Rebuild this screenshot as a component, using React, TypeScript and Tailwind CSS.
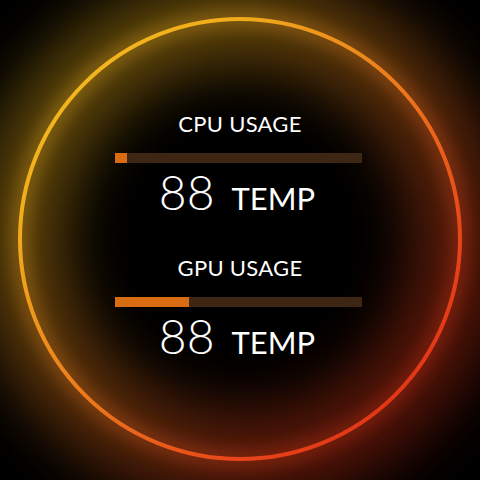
import React from "react"

interface GaugeProps {
    label: string
    percent: number
    value: string
}

function UsageBlock({ label, percent, value }: GaugeProps) {
    return (
        <div className="flex flex-col items-center">
            <div className="text-[22px] leading-[26px] font-normal tracking-[0.3px] text-white">{label}</div>
            <div className="mt-[16px] h-[10px] w-[247px] -translate-x-[2px] bg-[#3e2614]">
                <div className="h-full bg-[#d86c12]" style={{ width: `${percent}%` }} />
            </div>
            <div className="mt-[3px] flex -translate-x-[3px] items-baseline gap-[17px] text-white">
                <span className="text-[48px] leading-[52px] font-light">{value}</span>
                <span className="text-[31px] leading-[40px] font-normal">TEMP</span>
            </div>
        </div>
    )
}

function Ring() {
    return (
        <svg className="absolute inset-0" width="480" height="480" viewBox="0 0 480 480">
            <defs>
                <linearGradient id="ring" x1="0" y1="0" x2="480" y2="480" gradientUnits="userSpaceOnUse">
                    <stop offset="0" stopColor="#f8c820" />
                    <stop offset="0.27" stopColor="#f0aa1c" />
                    <stop offset="0.5" stopColor="#ec7a1c" />
                    <stop offset="0.73" stopColor="#e8441a" />
                    <stop offset="1" stopColor="#d82010" />
                </linearGradient>
                <filter id="wide" x="-40%" y="-40%" width="180%" height="180%">
                    <feGaussianBlur stdDeviation="30" />
                </filter>
                <filter id="near" x="-10%" y="-10%" width="120%" height="120%">
                    <feGaussianBlur stdDeviation="8" />
                </filter>
            </defs>
            <circle cx="240" cy="239" r="220" fill="none" stroke="url(#ring)" strokeWidth="90" opacity="0.38" filter="url(#wide)" />
            <circle cx="240" cy="239" r="220" fill="none" stroke="url(#ring)" strokeWidth="18" opacity="0.3" filter="url(#near)" />
            <circle cx="240" cy="239" r="220" fill="none" stroke="url(#ring)" strokeWidth="4" />
        </svg>
    )
}

export default function App() {
    return (
        <div className="relative h-[480px] w-[480px] overflow-hidden bg-black font-['Lato',sans-serif]">
            <Ring />
            <div className="relative flex flex-col items-center gap-[37px] pt-[111px]">
                <UsageBlock label="CPU USAGE" percent={5} value="88" />
                <UsageBlock label="GPU USAGE" percent={30} value="88" />
            </div>
        </div>
    )
}
